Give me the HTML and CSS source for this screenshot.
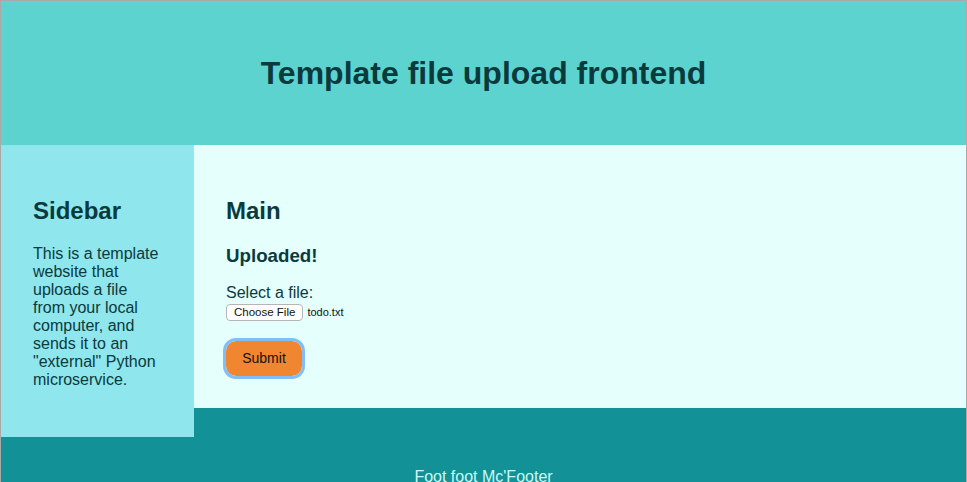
FILE: index.html
```html
<!DOCTYPE html>
<html lang="en">
<head>
<meta charset="utf-8">
<title>Template file upload frontend</title>
<link rel="stylesheet" href="styles.css">
</head>
<body>
<div class="page">
  <header class="header">
    <h1 class="title">Template file upload frontend</h1>
  </header>
  <aside class="sidebar">
    <h2 class="heading">Sidebar</h2>
    <p class="text">This is a template website that uploads a file from your local computer, and sends it to an "external" Python microservice.</p>
  </aside>
  <main class="main">
    <h2 class="heading">Main</h2>
    <h3 class="status">Uploaded!</h3>
    <form class="form">
      <label class="label">Select a file:</label>
      <div class="file-row">
        <button type="button" class="choose">Choose File</button>
        <span class="filename">todo.txt</span>
      </div>
      <button type="button" class="submit">Submit</button>
    </form>
  </main>
  <footer class="footer">
    <p class="foot-text">Foot foot Mc'Footer</p>
  </footer>
</div>
</body>
</html>
```
FILE: styles.css
```css
html, body {
  margin: 0;
  padding: 0;
}
body {
  border: 1px solid #a9a9a9;
  border-bottom: none;
  font-family: "Liberation Sans", Arial, Helvetica, sans-serif;
  color: #0b3a3d;
  background: #129196;
  overflow: hidden;
}
.page {
  display: grid;
  grid-template-columns: 193px 1fr;
  grid-template-rows: 144px 263px 29px auto;
}
.header {
  grid-column: 1 / 3;
  grid-row: 1;
  background: #5dd3cf;
  display: flex;
  align-items: center;
  justify-content: center;
}
.title {
  margin: 0;
  font-size: 32px;
  font-weight: bold;
  color: #0b3a3d;
}
.sidebar {
  grid-column: 1;
  grid-row: 2 / 4;
  z-index: 1;
  background: #8fe6ec;
  padding: 32px;
}
.heading {
  font-size: 24px;
  margin: 19.92px 0;
}
.text {
  font-size: 16px;
  margin: 16px 0;
  line-height: 18px;
}
.main {
  grid-column: 2;
  grid-row: 2;
  background: #e4fffc;
  padding: 32px;
}
.status {
  font-size: 18.72px;
  margin: 18.72px 0 16.72px;
}
.form {
  display: flex;
  flex-direction: column;
  align-items: flex-start;
}
.label {
  font-size: 16px;
  line-height: 18px;
}
.file-row {
  display: flex;
  align-items: center;
  gap: 4px;
  margin-top: 2px;
}
.choose {
  font-family: "Liberation Sans", Arial, sans-serif;
  font-size: 11.5px;
  color: #111;
  background: #fff;
  border: 1px solid #b5b5b5;
  border-radius: 4px;
  height: 17px;
  padding: 0 7px;
  line-height: 15px;
}
.filename {
  font-size: 11px;
  color: #111;
}
.submit {
  margin-top: 20px;
  margin-left: 0;
  width: 76px;
  height: 35px;
  border: none;
  border-radius: 10px;
  background: #f0862f;
  color: #111;
  font-family: "Liberation Sans", Arial, sans-serif;
  font-size: 14px;
  outline: 3px solid #82bdf6;
  outline-offset: 0;
  padding: 0;
}
.footer {
  grid-column: 1 / 3;
  grid-row: 3 / 5;
  background: #129196;
  padding: 60px 32px 32px;
  text-align: center;
}
.foot-text {
  margin: 0;
  font-size: 16px;
  color: #c9fbf7;
}
```
